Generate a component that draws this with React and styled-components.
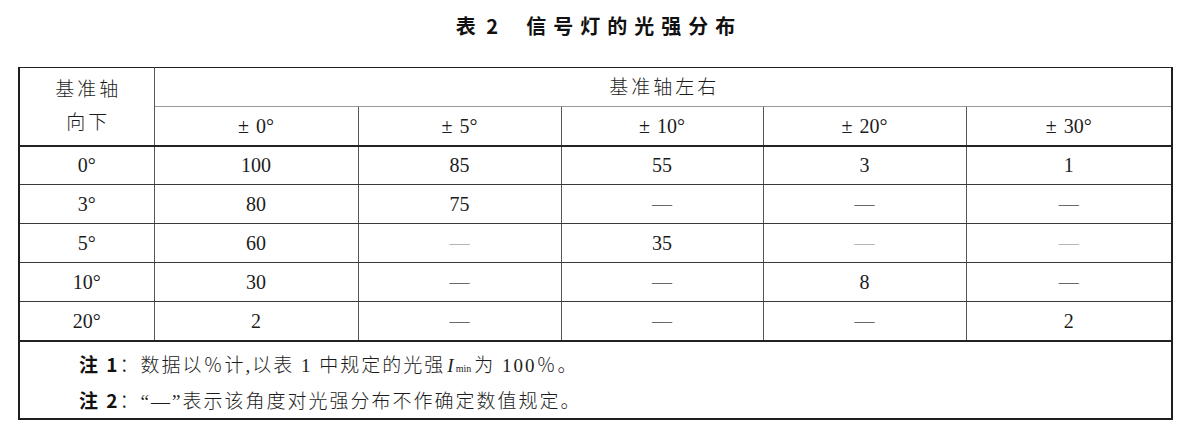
import React from "react";
import styled, { createGlobalStyle } from "styled-components";

const Global = createGlobalStyle`
  html, body { margin: 0; padding: 0; background: #fff; }
  body {
    font-family: "Liberation Serif", "Noto Sans CJK SC", serif;
    color: #1c1c1c;
  }
`;

const Page = styled.div`
  width: 1193px;
  height: 431px;
  overflow: hidden;
  box-sizing: border-box;
  padding: 10px 0 0 18px;
  display: flex;
  flex-direction: column;
`;

const Title = styled.h1`
  margin: 0;
  width: 1155px;
  height: 30px;
  display: flex;
  justify-content: center;
  align-items: center;
  gap: 28px;
  font-family: "Noto Sans CJK SC", sans-serif;
  font-weight: 700;
  font-size: 20px;
  color: #111;
`;

const TitleLabel = styled.span`
  word-spacing: 6px;
`;

const TitleText = styled.span`
  letter-spacing: 7px;
  margin-right: -7px;
`;

const Table = styled.table`
  margin-top: 27px;
  width: 1155px;
  table-layout: fixed;
  border-collapse: collapse;
  border-top: 1px solid #222;
  border-left: 2px solid #1e1e1e;
  border-right: 2px solid #1e1e1e;
  border-bottom: 2px solid #1e1e1e;
`;

const Row = styled.tr`
  height: ${(p) => p.$h || 39}px;
`;

const Cell = styled.td`
  padding: 0;
  text-align: center;
  vertical-align: middle;
  font-size: 20px;
  line-height: 1;
  border-right: 1px solid #555;
  border-bottom: ${(p) =>
    p.$bottom === "thick"
      ? "2px solid #222"
      : p.$bottom === "light"
      ? "1px solid #999"
      : "1px solid #3a3a3a"};
`;

const HeadText = styled.span`
  display: inline-block;
  font-size: 19px;
  line-height: 33px;
  letter-spacing: 3px;
  padding-left: 3px;
  font-weight: 300;
`;

const Pm = styled.span`
  margin-right: 7px;
`;

const Dash = styled.span`
  color: ${(p) => (p.$faint ? "#b5b5b5" : "#6a6a6a")};
`;

const NoteCell = styled.td`
  box-sizing: border-box;
  height: 77px;
  padding: 4px 0 0 59px;
  vertical-align: top;
  text-align: left;
  font-size: 19px;
  letter-spacing: 2px;
  font-weight: 300;
`;

const NoteLine = styled.div`
  height: 36px;
  line-height: 36px;
  white-space: nowrap;
`;

const NoteTag = styled.span`
  font-family: "Noto Sans CJK SC", sans-serif;
  font-weight: 700;
  color: #111;
`;

const Ital = styled.i`
  font-style: italic;
  margin-left: 2px;
`;

const Sub = styled.sub`
  font-size: 10px;
  letter-spacing: 0;
  vertical-align: baseline;
  margin-right: 3px;
`;

const widths = [135, 204, 203, 202, 203, 206];
const angles = ["0", "5", "10", "20", "30"];
const rows = [
  { v: "0", cells: ["100", "85", "55", "3", "1"] },
  { v: "3", cells: ["80", "75", "-", "-", "-"] },
  { v: "5", cells: ["60", "-", "35", "-", "-"], faint: true },
  { v: "10", cells: ["30", "-", "-", "8", "-"] },
  { v: "20", cells: ["2", "-", "-", "-", "2"] },
];

export default function App() {
  return (
    <>
      <Global />
      <Page>
        <Title>
          <TitleLabel>表 2</TitleLabel>
          <TitleText>信号灯的光强分布</TitleText>
        </Title>
        <Table>
          <colgroup>
            {widths.map((w, i) => (
              <col key={i} style={{ width: w }} />
            ))}
          </colgroup>
          <tbody>
            <Row>
              <Cell rowSpan={2} $bottom="thick">
                <HeadText>
                  基准轴
                  <br />
                  向下
                </HeadText>
              </Cell>
              <Cell colSpan={5} $bottom="light">
                <HeadText>基准轴左右</HeadText>
              </Cell>
            </Row>
            <Row>
              {angles.map((a) => (
                <Cell key={a} $bottom="thick">
                  <Pm>±</Pm>
                  {a}°
                </Cell>
              ))}
            </Row>
            {rows.map((r, ri) => (
              <Row key={r.v}>
                <Cell $bottom={ri === rows.length - 1 ? "thick" : undefined}>
                  {r.v}°
                </Cell>
                {r.cells.map((c, ci) => (
                  <Cell
                    key={ci}
                    $bottom={ri === rows.length - 1 ? "thick" : undefined}
                  >
                    {c === "-" ? <Dash $faint={r.faint}>—</Dash> : c}
                  </Cell>
                ))}
              </Row>
            ))}
            <Row $h={77}>
              <NoteCell colSpan={6}>
                <NoteLine>
                  <NoteTag>注 1</NoteTag>：数据以％计,以表 1 中规定的光强
                  <Ital>I</Ital>
                  <Sub>min</Sub>为 100％。
                </NoteLine>
                <NoteLine>
                  <NoteTag>注 2</NoteTag>：“—”表示该角度对光强分布不作确定数值规定。
                </NoteLine>
              </NoteCell>
            </Row>
          </tbody>
        </Table>
      </Page>
    </>
  );
}
